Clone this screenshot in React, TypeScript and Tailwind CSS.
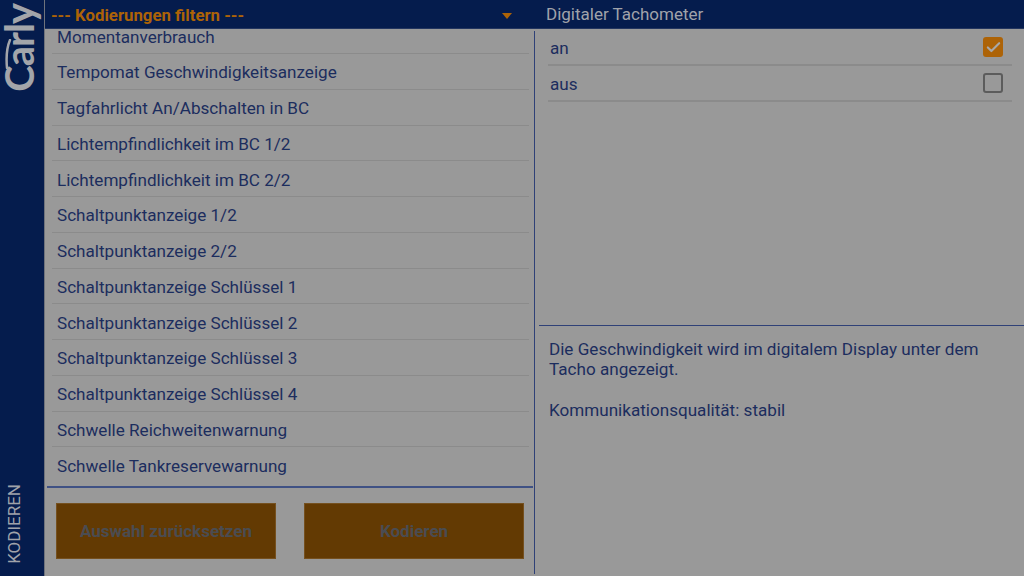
import { Check } from "lucide-react";

const codings = [
  "Momentanverbrauch",
  "Tempomat Geschwindigkeitsanzeige",
  "Tagfahrlicht An/Abschalten in BC",
  "Lichtempfindlichkeit im BC 1/2",
  "Lichtempfindlichkeit im BC 2/2",
  "Schaltpunktanzeige 1/2",
  "Schaltpunktanzeige 2/2",
  "Schaltpunktanzeige Schlüssel 1",
  "Schaltpunktanzeige Schlüssel 2",
  "Schaltpunktanzeige Schlüssel 3",
  "Schaltpunktanzeige Schlüssel 4",
  "Schwelle Reichweitenwarnung",
  "Schwelle Tankreservewarnung",
];

function Sidebar() {
  return (
    <aside className="w-[45px] h-full shrink-0 bg-[#051c4d] border-r border-[#6f737c] flex flex-col justify-between items-center">
      <div className="relative h-[92px] w-[44px] flex items-start justify-start pt-[4px]">
        <span className="[writing-mode:vertical-rl] rotate-180 text-[40px] leading-[38px] font-bold tracking-[-1px] text-[#a3a5aa] font-['Lato',sans-serif]">
          Carly
        </span>
        <svg className="absolute left-[3px] top-[39px]" width="10" height="30" viewBox="0 0 10 30" fill="none">
          <path d="M7 1 C4 8 3 18 4 29" stroke="#a3a5aa" strokeWidth="2.5" strokeLinecap="round" />
        </svg>
      </div>
      <span className="[writing-mode:vertical-rl] rotate-180 text-[17px] leading-[20px] text-[#a0a3aa] mb-[12px] mr-[16px]">
        KODIEREN
      </span>
    </aside>
  );
}

function CodingList() {
  return (
    <div className="w-[489px] shrink-0 h-full flex flex-col">
      <div className="h-[459px] ml-[2px] mr-[1px] overflow-hidden border-b-2 border-[#3f5184]">
        <ul className="-mt-[10.75px] pl-[5px] pr-[4px]">
          {codings.map((name, i) => (
            <li
              key={name}
              className={
                "h-[35.75px] flex items-center pl-[5px] pt-[3.5px] text-[17.1px] text-[#1c2d5e] border-b " +
                (i < codings.length - 1 ? "border-[#8b8b8b]" : "border-transparent")
              }
            >
              {name}
            </li>
          ))}
        </ul>
      </div>
      <div className="flex pl-[11px] pt-[15px] gap-[28px]">
        <button className="w-[220px] h-[56px] pt-[2px] bg-[#633a03] border border-[#75501f] text-[17px] font-bold text-[#4a4c52]">
          Auswahl zurücksetzen
        </button>
        <button className="w-[220px] h-[56px] pt-[2px] bg-[#633a03] border border-[#75501f] text-[17px] font-bold text-[#4a4c52]">
          Kodieren
        </button>
      </div>
    </div>
  );
}

function OptionRow({ label, checked }: { label: string; checked?: boolean }) {
  return (
    <div className="h-[36px] flex items-center justify-between pt-[3px] pl-[2px] pr-[9px] border-b-2 border-[#8b8b8b] text-[17.1px] text-[#1c2d5e]">
      <span>{label}</span>
      {checked ? (
        <span className="-mt-[3px] w-[20px] h-[20px] rounded-[3px] bg-[#ad6307] flex items-center justify-center">
          <Check size={17} strokeWidth={3} className="text-[#a8a8a8]" />
        </span>
      ) : (
        <span className="-mt-[3px] w-[20px] h-[20px] rounded-[3px] border-2 border-[#5c5c5c]" />
      )}
    </div>
  );
}

function DetailPane() {
  return (
    <div className="flex-1 h-[543px] mt-[2px] flex flex-col border-l border-[#2f4177]">
      <div className="h-[295px] ml-[4px] pl-[9px] pr-[12px] border-b border-[#2f4177]">
        <div className="-mt-[1px]">
          <OptionRow label="an" checked />
          <OptionRow label="aus" />
        </div>
      </div>
      <div className="pl-[14px] pr-[20px] pt-[13px] text-[17.1px] leading-[20.25px] text-[#1c2d5e]">
        <p>Die Geschwindigkeit wird im digitalem Display unter dem</p>
        <p>Tacho angezeigt.</p>
        <p className="mt-[20.25px]">Kommunikationsqualität: stabil</p>
      </div>
    </div>
  );
}

export default function App() {
  return (
    <div className="w-[1024px] h-[576px] flex bg-[#999999] overflow-hidden font-['Roboto',sans-serif]">
      <Sidebar />
      <main className="flex-1 flex flex-col min-w-0">
        <header className="h-[29px] shrink-0 flex bg-[#051c4d] border-b border-[#23355f]">
          <div className="w-[489px] shrink-0 flex items-center justify-between pt-[3px] pl-[6px] pr-[22px] text-[16.8px] font-bold text-[#ad6307]">
            <span>--- Kodierungen filtern ---</span>
            <span className="w-0 h-0 border-l-[5px] border-r-[5px] border-t-[6px] border-l-transparent border-r-transparent border-t-[#ad6307]" />
          </div>
          <div className="pl-[12px] pt-[1px] flex items-center text-[17px] text-[#a0a3aa]">
            Digitaler Tachometer
          </div>
        </header>
        <div className="flex flex-1 min-h-0">
          <CodingList />
          <DetailPane />
        </div>
      </main>
    </div>
  );
}
